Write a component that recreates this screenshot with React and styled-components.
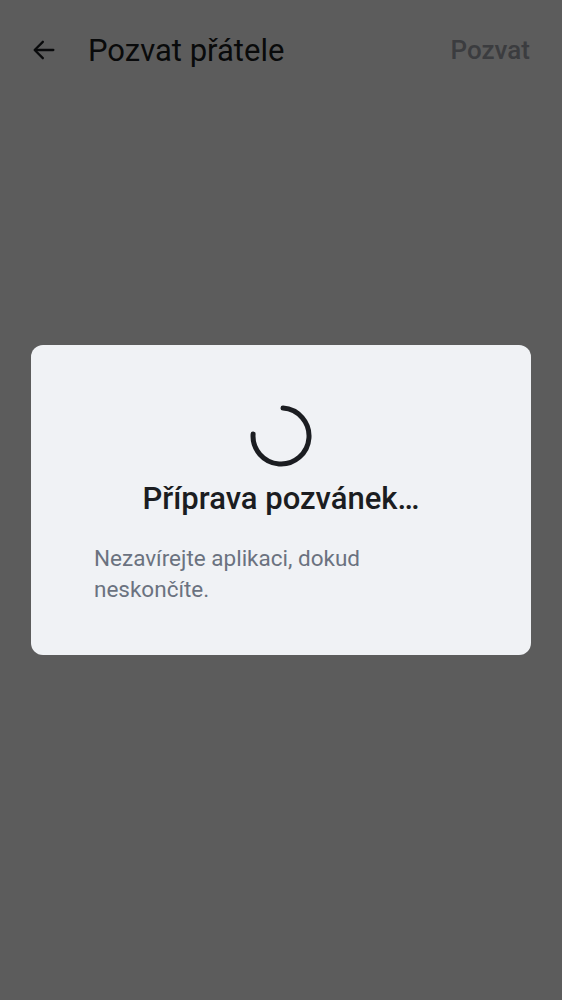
import React from 'react'
import styled, { createGlobalStyle } from 'styled-components'

const GlobalStyle = createGlobalStyle`
    html, body {
        margin: 0;
        padding: 0;
        background: #ffffff;
        font-family: Roboto, "Noto Sans", sans-serif;
    }
`

const Screen = styled.div`
    position: relative;
    width: 562px;
    height: 1000px;
    overflow: hidden;
    background: #ffffff;
`

const TopBar = styled.header`
    display: flex;
    align-items: center;
    height: 100px;
    padding: 0 32px 0 30px;
    box-sizing: border-box;
`

const BackButton = styled.button`
    display: flex;
    align-items: center;
    justify-content: center;
    width: 28px;
    height: 28px;
    padding: 0;
    margin-right: 30px;
    border: none;
    background: none;
    color: #1b1d21;
`

const Title = styled.h1`
    flex: 1;
    margin: 0;
    font-size: 31px;
    font-weight: 400;
    color: #1b1d21;
`

const ActionLink = styled.span`
    font-size: 26px;
    font-weight: 500;
    color: #a3a7ae;
`

const Overlay = styled.div`
    position: absolute;
    inset: 0;
    display: flex;
    align-items: center;
    justify-content: center;
    background: rgba(0, 0, 0, 0.64);
`

const Dialog = styled.div`
    width: 500px;
    box-sizing: border-box;
    padding: 59px 63px 50px;
    border-radius: 12px;
    background: #f0f2f5;
    display: flex;
    flex-direction: column;
`

const Spinner = styled.svg`
    align-self: center;
    width: 64px;
    height: 64px;
`

const DialogTitle = styled.h2`
    margin: 11px 0 0;
    text-align: center;
    font-size: 31px;
    line-height: 40px;
    font-weight: 500;
    color: #1b1d21;
`

const DialogText = styled.p`
    margin: 24px 0 0;
    font-size: 22.5px;
    line-height: 31px;
    color: #6b7280;
`

const App = () => {
    return (
        <Screen>
            <GlobalStyle />
            <TopBar>
                <BackButton aria-label="Zpět">
                    <svg width="28" height="28" viewBox="0 0 24 24" fill="none" stroke="currentColor" strokeWidth="2" strokeLinecap="round" strokeLinejoin="round">
                        <path d="M20 12H4.5" />
                        <path d="M11 5l-7 7 7 7" />
                    </svg>
                </BackButton>
                <Title>Pozvat přátele</Title>
                <ActionLink>Pozvat</ActionLink>
            </TopBar>
            <Overlay>
                <Dialog>
                    <Spinner viewBox="0 0 64 64">
                        <path
                            d="M34 4.1 A28 28 0 1 1 4.1 30"
                            fill="none"
                            stroke="#1b1d21"
                            strokeWidth="5"
                            strokeLinecap="round"
                        />
                    </Spinner>
                    <DialogTitle>Příprava pozvánek…</DialogTitle>
                    <DialogText>Nezavírejte aplikaci, dokud neskončíte.</DialogText>
                </Dialog>
            </Overlay>
        </Screen>
    )
}

export default App
